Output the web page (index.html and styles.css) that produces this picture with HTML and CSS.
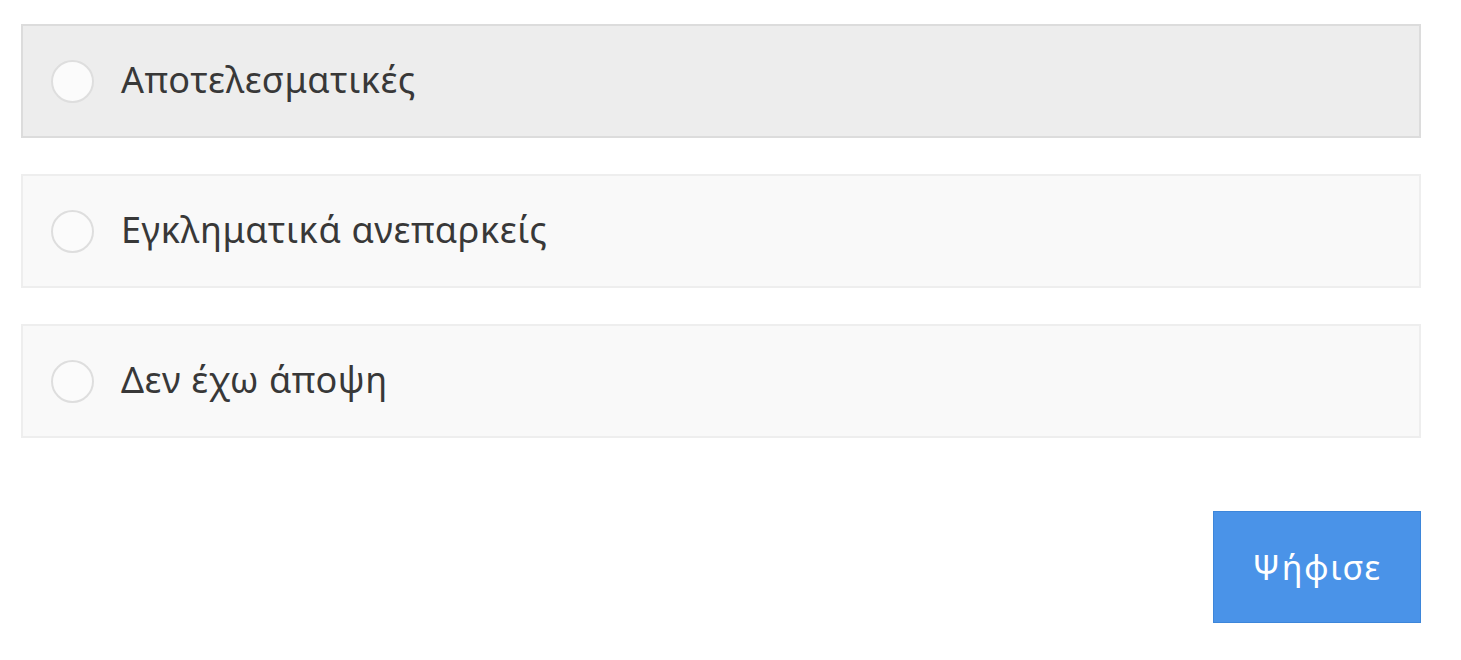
FILE: index.html
```html
<!DOCTYPE html>
<html lang="el">
<head>
<meta charset="utf-8">
<link rel="stylesheet" href="styles.css">
</head>
<body>
<div class="poll">
  <div class="options">
    <label class="option option-active"><span class="radio"></span><span class="label">Αποτελεσματικές</span></label>
    <label class="option"><span class="radio"></span><span class="label">Εγκληματικά ανεπαρκείς</span></label>
    <label class="option"><span class="radio"></span><span class="label">Δεν έχω άποψη</span></label>
  </div>
  <div class="actions">
    <button class="vote">Ψήφισε</button>
  </div>
</div>
</body>
</html>
```
FILE: styles.css
```css
html, body {
  margin: 0;
  padding: 0;
  background: #ffffff;
}
body {
  font-family: "Noto Sans", "DejaVu Sans", sans-serif;
  color: #383838;
}
.poll {
  width: 1400px;
  padding: 24px 0 0 21px;
}
.options {
  display: flex;
  flex-direction: column;
  gap: 36px;
}
.option {
  box-sizing: border-box;
  height: 114px;
  display: flex;
  align-items: center;
  padding-left: 28px;
  background: #f9f9f9;
  border: 2px solid #eeeeee;
}
.option-active {
  background: #ededed;
  border-color: #dcdcdc;
}
.radio {
  box-sizing: border-box;
  width: 43px;
  height: 43px;
  border-radius: 50%;
  background: #fbfbfb;
  border: 2px solid #dedede;
  flex: none;
}
.label {
  margin-left: 27px;
  font-size: 36px;
  letter-spacing: 0.6px;
  line-height: 1;
  padding-bottom: 2px;
}
.actions {
  display: flex;
  justify-content: flex-end;
  margin-top: 73px;
}
.vote {
  box-sizing: border-box;
  width: 208px;
  height: 112px;
  background: #4a93e8;
  border: 1px solid #3d86da;
  color: #ffffff;
  font-family: "Noto Sans", "DejaVu Sans", sans-serif;
  font-size: 34px;
  letter-spacing: 1.6px;
  padding: 0;
}
```
